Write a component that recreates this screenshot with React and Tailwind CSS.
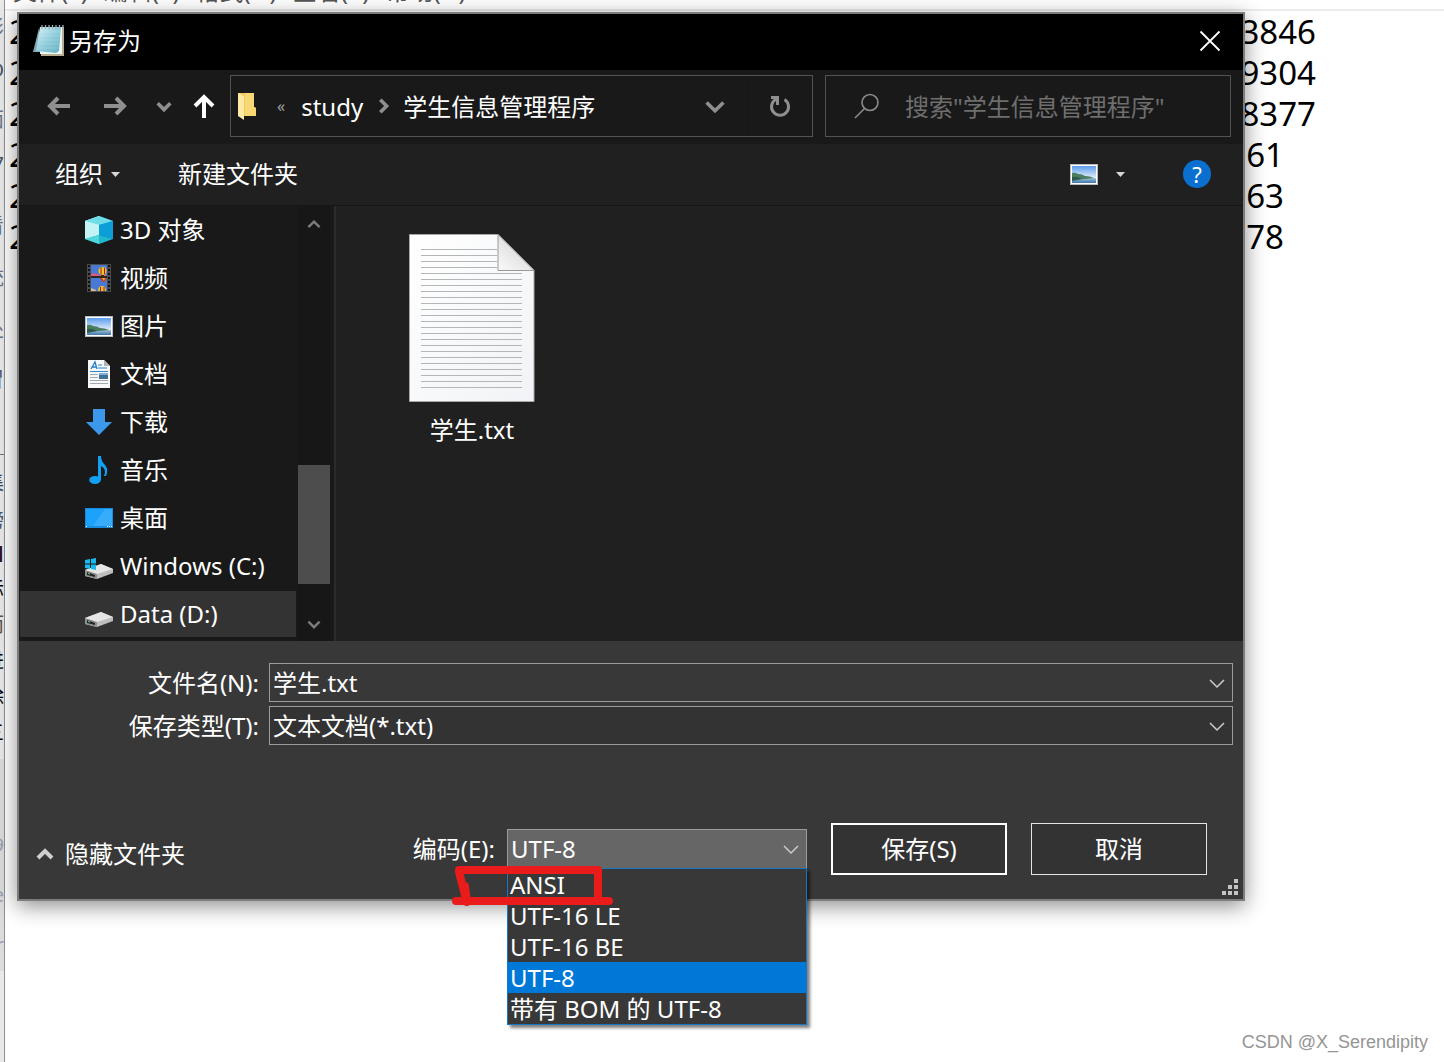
import { useState } from 'react';

const MENUS = ['文件(F)', '编辑(E)', '格式(O)', '查看(V)', '帮助(H)'];

const LINES = [
  { start: '2', end: '3846', pad: 'pr-32' },
  { start: '2', end: '9304', pad: 'pr-32' },
  { start: '2', end: '8377', pad: 'pr-32' },
  { start: '2', end: '561', pad: 'pr-40' },
  { start: '2', end: '763', pad: 'pr-40' },
  { start: '2', end: '678', pad: 'pr-40' },
];

const ENCODINGS = ['ANSI', 'UTF-16 LE', 'UTF-16 BE', 'UTF-8', '带有 BOM 的 UTF-8'];

// edge of the browser page that sits behind the editor
const EDGE = [
  { text: '影', cls: 'h-[50px] pt-2 text-gray-500' },
  { text: 'O', cls: 'h-[50px] text-gray-600' },
  { text: '面', cls: 'h-[44px] text-gray-500' },
  { text: '7', cls: 'h-[62px] text-gray-600' },
  { text: '看', cls: 'h-[52px] text-gray-500' },
  { text: '统', cls: 'h-[52px] text-gray-500' },
  { text: '处', cls: 'h-[50px] text-gray-500' },
  { text: '冒', cls: 'h-[95px] border-b border-gray-500 text-gray-600' },
  { text: '集', cls: 'h-[46px] pt-2 text-slate-700' },
  { text: '榜', cls: 'h-[34px] text-slate-600' },
  { text: '■', cls: 'h-[34px] text-[#3a1420]' },
  { text: '际', cls: 'h-[36px] text-black' },
  { text: '而', cls: 'h-[36px] text-[#5c5442]' },
  { text: '进', cls: 'h-[36px] text-black' },
  { text: '除', cls: 'h-[36px] text-black' },
  { text: '三', cls: 'h-[46px] text-black' },
  { text: '、', cls: 'h-[66px] bg-[#dcdcdc] text-gray-400' },
  { text: '9', cls: 'h-[50px] bg-[#dcdcdc] text-gray-400' },
  { text: 'e', cls: 'h-[50px] bg-[#dcdcdc] text-gray-400' },
  { text: 'r', cls: 'h-[46px] bg-[#dcdcdc] text-gray-400' },
];

function Chevron({ className, size = 20, width = 4, dir = 'down' }) {
  const paths = {
    down: 'M3 7 L10 14 L17 7',
    up: 'M3 14 L10 7 L17 14',
    right: 'M7 3 L14 10 L7 17',
  };
  return (
    <svg className={className} width={size} height={size} viewBox="0 0 20 20" fill="none" stroke="currentColor" strokeWidth={width}>
      <path d={paths[dir]} />
    </svg>
  );
}

function Caret() {
  return (
    <svg width="9" height="5" viewBox="0 0 9 5" fill="#d6d6d6">
      <path d="M0 0H9L4.5 5Z" />
    </svg>
  );
}

function NotepadIcon() {
  return (
    <svg width="32" height="34" viewBox="0 0 32 34">
      <defs>
        <linearGradient id="pad" x1="0" y1="0" x2="1" y2="1">
          <stop offset="0" stopColor="#d5f1f6" />
          <stop offset="0.55" stopColor="#8ccad9" />
          <stop offset="1" stopColor="#64afc2" />
        </linearGradient>
      </defs>
      <path d="M6 4L0 28H8Z" fill="#7fa9b3" />
      <path d="M8 3H31V32H8Z" fill="#b5ac92" />
      <path d="M7 3H29V30H7Z" fill="#edf6f5" />
      <path d="M7 3H28L26 27L23 29L3 27Z" fill="url(#pad)" />
      <path d="M7 8H27M6 12H27M6 16H26M5 20H26M4 24H25" stroke="#e0f5f8" strokeWidth="0.6" opacity="0.4" />
      <path d="M9 1V5M12.500 1V5M16 1V5M19.500 1V5M23 1V5M26.500 1V5M30 1V5" stroke="#9eb0b2" strokeWidth="1.3" />
    </svg>
  );
}

function FolderIcon() {
  return (
    <svg width="20" height="28" viewBox="0 0 20 28">
      <path d="M1 1H17V15L19 16V24H1Z" fill="#f3c85c" />
      <path d="M8 1H17V15L19 16V24H8Z" fill="#f8d775" />
      <path d="M1 1L7 4V28L1 24Z" fill="#ffeaa5" />
    </svg>
  );
}

function CubeIcon() {
  return (
    <svg width="28" height="28" viewBox="0 0 28 28">
      <path d="M0 5L14 0V19L0 23Z" fill="#84dfe6" />
      <path d="M0 5L14 0V9L14 19L0 23Z" fill="#a5ecee" />
      <path d="M14 0L28 5V23L14 19Z" fill="#12a5dc" />
      <path d="M0 5L14 0L28 5L14 9Z" fill="#6fdce8" />
      <path d="M14 9L28 5V23L14 19Z" fill="#0c9ed9" />
      <path d="M0 5L14 9V19L0 23Z" fill="#c4f3f4" />
      <path d="M0 23L14 19L28 23L14 28Z" fill="#22b8cf" />
      <path d="M0 23L14 19V28Z" fill="#4fd8dc" />
    </svg>
  );
}

function VideoIcon() {
  return (
    <svg width="24" height="28" viewBox="0 0 24 28">
      <path d="M0 0H24V28H0Z" fill="#4b4b4b" />
      <path d="M2 1V28M22 1V28" stroke="#111" strokeWidth="2" strokeDasharray="2 2" />
      <path d="M4 1H20V13H4ZM4 14H20V27H4Z" fill="#4779d5" />
      <path d="M4 10Q8 8 12 11L20 11V13H4Z" fill="#d75b86" />
      <path d="M4 12H20V14H4Z" fill="#302719" />
      <ellipse cx="15.500" cy="7" rx="4" ry="4" fill="#f0c02c" />
      <path d="M14 3.500V10.500M17.500 4V10" stroke="#9b1d22" />
      <path d="M14 11H17V13H14Z" fill="#3a2518" />
      <path d="M13 14H20L17.500 18H15.500Z" fill="#bf3d2c" />
      <path d="M15 14H18L17 17Z" fill="#e9b62c" />
      <path d="M11 27Q11 22 15 22Q19 22 19 27Z" fill="#efc12d" />
      <path d="M13.500 23V27M17 23V27" stroke="#9b1d22" />
      <path d="M4 24L9 26V27H4Z" fill="#d7bb93" />
    </svg>
  );
}

function PictureIcon() {
  return (
    <svg width="28" height="21" viewBox="0 0 28 21">
      <defs>
        <linearGradient id="sky" x1="0" y1="0" x2="0" y2="1">
          <stop offset="0" stopColor="#5c9ded" />
          <stop offset="1" stopColor="#e4f1fa" />
        </linearGradient>
        <linearGradient id="lake" x1="0" y1="0" x2="0" y2="1">
          <stop offset="0" stopColor="#a3c3dc" />
          <stop offset="1" stopColor="#3d75a8" />
        </linearGradient>
      </defs>
      <path d="M0 0H28V21H0Z" fill="#b9bec2" />
      <path d="M1 1H27V20H1Z" fill="#fff" />
      <path d="M2 2H26V14H2Z" fill="url(#sky)" />
      <path d="M2 14H26V19H2Z" fill="url(#lake)" />
      <path d="M2 9Q5 8 8 10Q12 10 15 12Q20 12 24 14L14 15L2 16Z" fill="#4b7d5e" />
      <path d="M2 13Q7 12 12 15L2 17Z" fill="#2f5a4f" />
    </svg>
  );
}

function DocumentIcon() {
  return (
    <svg width="22" height="28" viewBox="0 0 22 28">
      <path d="M0 0H16L22 6V28H0Z" fill="#f7f8fa" />
      <path d="M16 0V6H22Z" fill="#aeb4ba" />
      <path d="M3 9L7 2L9 9M4 7H9" stroke="#277dc4" strokeWidth="1.300" fill="none" />
      <path d="M10 5H14M10 8H19M2 11.500H20" stroke="#2c86cb" strokeWidth="1.200" />
      <path d="M2 14.500H10M2 17.500H10M2 20.500H20M2 23.500H20" stroke="#a3a8ac" />
      <path d="M11 13H20V19H11Z" fill="#3e7094" />
      <path d="M11 13H20V15H11Z" fill="#83a9d5" />
    </svg>
  );
}

function DownloadIcon() {
  return (
    <svg width="26" height="26" viewBox="0 0 26 26">
      <path d="M7 0H19V13H26L13 26L0 13H7Z" fill="#3b98ea" />
    </svg>
  );
}

function MusicIcon() {
  return (
    <svg width="20" height="28" viewBox="0 0 20 28" fill="#12a0f5">
      <ellipse cx="6" cy="24" rx="5.800" ry="4" />
      <path d="M9 0H12Q12 5 16 9Q20 14 17 20L15 20Q18 13 12 10V24H9Z" />
    </svg>
  );
}

function DesktopIcon() {
  return (
    <svg width="28" height="20" viewBox="0 0 28 20">
      <path d="M0 0H28V20H0Z" fill="#168be0" />
      <path d="M1 1H27V18H1Z" fill="#1da2fc" />
      <path d="M20 1H27V18H8Z" fill="#36acfb" />
      <path d="M1 18.500H2M22 18.500H23M24 18.500H25M26 18.500H27" stroke="#fff" />
    </svg>
  );
}

function DriveIcon({ system }) {
  return (
    <svg width="28" height="28" viewBox="0 0 28 28">
      <path d="M0 18L16 12L28 17V21L12 27L0 24Z" fill="#bebebe" />
      <path d="M0 18L16 12L28 17L12 22Z" fill="#e6e6e6" />
      <path d="M0 18L12 22V27L0 24Z" fill="#909090" />
      <path d="M2 20L10 23V25L2 23Z" fill="#252525" />
      <path d="M3 21.500L5 22" stroke="#54e06b" />
      {system && <path d="M0 8L5 7V11.500H0ZM6 7L11 6V11.500H6ZM0 12.500H5V17L0 16ZM6 12.500H11V18L6 17Z" fill="#19b9ee" />}
    </svg>
  );
}

function TextFileIcon() {
  const rows = Array.from({ length: 24 }, (_, i) => 15.5 + i * 6);
  return (
    <svg width="126" height="168" viewBox="0 0 126 168">
      <defs>
        <linearGradient id="paper" x1="0" y1="0" x2="1" y2="1">
          <stop offset="0" stopColor="#fff" />
          <stop offset="1" stopColor="#f1f3f6" />
        </linearGradient>
        <linearGradient id="fold" x1="0" y1="1" x2="0.6" y2="0.3">
          <stop offset="0" stopColor="#fafafa" />
          <stop offset="1" stopColor="#dcdcdc" />
        </linearGradient>
      </defs>
      <path d="M0.500 0.500H89L125 36V167.500H0.500Z" fill="url(#paper)" stroke="#a8a8a8" />
      {rows.map((y) => (
        <path key={y} d={`M12 ${y}H${y < 38 ? 88 : 113}`} stroke="#b5b6b8" />
      ))}
      <path d="M89 0.500L125 36.500H89Z" fill="url(#fold)" stroke="#999" />
    </svg>
  );
}

const PLACES = [
  { name: '3D 对象', icon: <CubeIcon /> },
  { name: '视频', icon: <VideoIcon /> },
  { name: '图片', icon: <PictureIcon /> },
  { name: '文档', icon: <DocumentIcon /> },
  { name: '下载', icon: <DownloadIcon /> },
  { name: '音乐', icon: <MusicIcon /> },
  { name: '桌面', icon: <DesktopIcon /> },
  { name: 'Windows (C:)', icon: <DriveIcon system /> },
  { name: 'Data (D:)', icon: <DriveIcon /> },
];

function Editor() {
  return (
    <div className="flex min-h-screen">
      <div className="w-[5px] shrink-0 overflow-hidden border-r border-[#8f8f8f] bg-[#e9e9e9] text-xl leading-10">
        {EDGE.map((item) => (
          <div key={item.text} className={`flex justify-end overflow-hidden ${item.cls}`}>
            {item.text}
          </div>
        ))}
      </div>
      <div className="min-w-0 flex-1 bg-white">
        <div className="flex h-[11px] items-end gap-4 overflow-hidden border-b-2 border-[#ececec] pb-1.5 pl-2 text-2xl leading-6 text-[#555]">
          {MENUS.map((menu) => (
            <span key={menu} className="whitespace-nowrap">{menu}</span>
          ))}
        </div>
        <div className="text-[33px] leading-[41px] text-black">
          {LINES.map((line) => (
            <div key={line.end} className={`flex justify-between pl-1 ${line.pad}`}>
              <span>{line.start}</span>
              <span>{line.end}</span>
            </div>
          ))}
        </div>
      </div>
    </div>
  );
}

function AddressBar() {
  return (
    <div className="flex h-[74px] items-center bg-[#191919] pr-3 pb-0.5 pl-7">
      <button aria-label="返回" className="text-[#8f8f8f]">
        <svg width="24" height="20" viewBox="0 0 24 20" fill="none" stroke="currentColor" strokeWidth="4">
          <path d="M23 10H3M11 2L3 10L11 18" />
        </svg>
      </button>
      <button aria-label="前进" className="ml-8 text-[#8f8f8f]">
        <svg width="24" height="20" viewBox="0 0 24 20" fill="none" stroke="currentColor" strokeWidth="4">
          <path d="M1 10H21M13 2L21 10L13 18" />
        </svg>
      </button>
      <button aria-label="最近浏览的位置" className="ml-7 text-[#8f8f8f]">
        <Chevron size={18} />
      </button>
      <button aria-label="上移" className="ml-5 text-white">
        <svg width="22" height="24" viewBox="0 0 22 24" fill="none" stroke="currentColor" strokeWidth="4">
          <path d="M11 24V4M2 12L11 3L20 12" />
        </svg>
      </button>
      <div className="ml-[15px] flex h-[62px] min-w-0 flex-1 items-center border border-[#535353] pl-1.5 text-white">
        <FolderIcon />
        <span className="ml-5 text-base text-[#a0a0a0]">«</span>
        <button className="ml-4 pt-0.5">study</button>
        <Chevron className="mx-[11px] text-[#8f8f8f]" dir="right" size={18} />
        <button className="pt-0.5 whitespace-nowrap">学生信息管理程序</button>
        <button aria-label="以前的位置" className="ml-auto pr-5 text-[#8f8f8f]">
          <Chevron size={24} width={3} />
        </button>
        <button aria-label="刷新" className="flex h-full w-[65px] items-center justify-center border-l border-[#161616] text-[#8f8f8f]">
          <svg width="22" height="24" viewBox="0 0 22 24" fill="none" stroke="currentColor" strokeWidth="3">
            <path d="M15.500 5.500A8.500 8.500 0 1 1 7.500 5M2 3.500H8.500V11" />
          </svg>
        </button>
      </div>
      <label className="ml-3 flex h-[62px] w-[406px] items-center border border-[#535353] pl-7 text-[#8a8a8a]">
        <svg width="26" height="26" viewBox="0 0 26 26" fill="none" stroke="currentColor" strokeWidth="1.600">
          <circle cx="16" cy="9.500" r="8" />
          <path d="M10.500 15.500L1 25" />
        </svg>
        <input
          type="text"
          aria-label="搜索"
          placeholder={'搜索"学生信息管理程序"'}
          className="ml-[25px] min-w-0 flex-1 bg-transparent pt-0.5 text-white outline-none placeholder:text-[#6e6e6e]"
        />
      </label>
    </div>
  );
}

function SideBar() {
  const [selected, setSelected] = useState('Data (D:)');

  return (
    <div className="flex w-[317px] shrink-0 border-r-2 border-[#2b2b2b] bg-[#191919]">
      <nav className="flex-1 pt-px pr-0.5 pl-px">
        {PLACES.map((place) => (
          <button
            key={place.name}
            onClick={() => setSelected(place.name)}
            className={`flex h-12 w-full items-center border-b-2 border-[#191919] pl-16 text-left whitespace-nowrap ${
              selected === place.name ? 'bg-[#333]' : ''
            }`}
          >
            <span className="flex w-[30px] justify-center">{place.icon}</span>
            <span className="ml-1.5">{place.name}</span>
          </button>
        ))}
      </nav>
      <div className="mr-1 flex w-8 flex-col items-center bg-[#171717] text-[#7c7c7c]">
        <Chevron className="mt-2.5 mb-auto" dir="up" size={16} width={3} />
        <div className="h-[119px] w-full bg-[#4d4d4d]" />
        <Chevron className="mt-8 mb-[9px]" size={16} width={3} />
      </div>
    </div>
  );
}

function EncodingSelect() {
  const [encoding, setEncoding] = useState('UTF-8');
  const [open, setOpen] = useState(true);

  return (
    <div className="relative w-[300px]">
      <select
        id="encoding"
        value={encoding}
        onChange={(e) => setEncoding(e.target.value)}
        onMouseDown={(e) => {
          e.preventDefault();
          setOpen(!open);
        }}
        className="h-10 w-full appearance-none border border-[#9b9b9b] bg-[#666] px-[3px] outline-none"
      >
        {ENCODINGS.map((name) => (
          <option key={name}>{name}</option>
        ))}
      </select>
      <Chevron className="pointer-events-none absolute top-2.5 right-1.5 text-[#ccc]" width={1.5} />
      {open && (
        <ul className="absolute top-[39px] left-0 w-full border border-[#1a78c2] bg-[#383838] leading-[31px] shadow-[3px_3px_3px_rgba(0,0,0,0.5)]">
          {ENCODINGS.map((name) => (
            <li
              key={name}
              onClick={() => {
                setEncoding(name);
                setOpen(false);
              }}
              className={`h-[31px] pl-0.5 whitespace-nowrap ${name === encoding ? 'bg-[#0078d7]' : ''}`}
            >
              {name}
            </li>
          ))}
        </ul>
      )}
      <svg
        className="pointer-events-none absolute top-9 -left-14"
        width="164"
        height="44"
        viewBox="0 0 164 44"
        fill="none"
        stroke="#e91b1b"
        strokeWidth="8"
        strokeLinecap="round"
        strokeLinejoin="round"
      >
        <path d="M5 36H158M8 7L15 34M14 21L16 37M8 5H147" />
        <path d="M147 5V35" strokeLinecap="butt" />
      </svg>
    </div>
  );
}

function SaveForm() {
  const [fileName, setFileName] = useState('学生.txt');
  const [folders, setFolders] = useState(true);

  return (
    <form onSubmit={(e) => e.preventDefault()} className="relative bg-[#383838] pt-[22px] pb-6">
      <div className="grid grid-cols-[240px_1fr] items-center gap-x-2.5 gap-y-1 pr-2.5">
        <label htmlFor="name" className="text-right">文件名(N):</label>
        <div className="relative">
          <input
            id="name"
            type="text"
            value={fileName}
            onChange={(e) => setFileName(e.target.value)}
            className="block h-[39px] w-full border border-[#9b9b9b] bg-[#383838] px-[3px] pb-0.5 outline-none"
          />
          <Chevron className="pointer-events-none absolute top-2.5 right-1.5 text-[#ccc]" width={1.5} />
        </div>
        <label htmlFor="type" className="text-right">保存类型(T):</label>
        <div className="relative">
          <select id="type" className="block h-[39px] w-full appearance-none border border-[#9b9b9b] bg-[#333] px-[3px] outline-none">
            <option>文本文档(*.txt)</option>
          </select>
          <Chevron className="pointer-events-none absolute top-2.5 right-1.5 text-[#ccc]" width={1.5} />
        </div>
      </div>
      <div className="mt-[78px] flex items-center gap-6 pr-9 pl-4">
        <button type="button" onClick={() => setFolders(!folders)} className="mr-auto flex items-center gap-2.5 pt-2.5">
          <Chevron className="text-[#d0d0d0]" dir={folders ? 'up' : 'down'} />
          {folders ? '隐藏文件夹' : '浏览文件夹'}
        </button>
        <div className="flex items-center gap-3">
          <label htmlFor="encoding">编码(E):</label>
          <EncodingSelect />
        </div>
        <button type="submit" className="h-[52px] w-44 border-2 border-white bg-[#333]">保存(S)</button>
        <button type="button" className="h-[52px] w-44 border border-[#e5e5e5] bg-[#333]">取消</button>
      </div>
      <svg className="absolute right-[5px] bottom-1" width="16" height="16" viewBox="0 0 16 16" fill="#c4c4c4">
        <path d="M12 0H16V4H12ZM6 6H10V10H6ZM12 6H16V10H12ZM0 12H4V16H0ZM6 12H10V16H6ZM12 12H16V16H12Z" />
      </svg>
    </form>
  );
}

export default function App() {
  return (
    <div className="relative min-h-screen overflow-hidden bg-white font-['Noto_Sans','Noto_Sans_CJK_SC',sans-serif]">
      <Editor />

      <div
        role="dialog"
        aria-label="另存为"
        className="absolute top-3 right-[199px] left-[17px] border-2 border-[#7c7c7c] text-2xl leading-8 text-white shadow-[0_5px_20px_rgba(0,0,0,0.45)]"
      >
        <div className="flex h-14 items-center bg-black pr-[22px] pb-0.5 pl-3.5">
          <NotepadIcon />
          <span className="ml-1">另存为</span>
          <button aria-label="关闭" className="ml-auto">
            <svg width="22" height="22" viewBox="0 0 22 22" stroke="#fff" strokeWidth="1.800">
              <path d="M1.500 1.500L20.500 20.500M20.500 1.500L1.500 20.500" />
            </svg>
          </button>
        </div>

        <AddressBar />

        <div className="flex h-[62px] items-center border-b border-[#161616] bg-[#202020] pr-8 pb-px pl-9">
          <button className="flex items-center gap-2">
            组织
            <Caret />
          </button>
          <button className="ml-[58px]">新建文件夹</button>
          <button aria-label="更改视图" className="ml-auto flex items-center gap-[18px]">
            <PictureIcon />
            <Caret />
          </button>
          <button aria-label="帮助" className="ml-[58px] h-7 w-7 rounded-full bg-[#0b6fd0] text-[22px] leading-7">
            ?
          </button>
        </div>

        <div className="flex bg-[#202020]">
          <SideBar />
          <div className="h-[435px] min-w-0 flex-1 px-[59px] pt-7">
            <button className="flex w-[154px] flex-col items-center gap-3">
              <TextFileIcon />
              学生.txt
            </button>
          </div>
        </div>

        <SaveForm />
      </div>

      <div className="absolute right-4 bottom-1.5 font-['Liberation_Sans',sans-serif] text-lg leading-7 text-[#959595]">
        CSDN @X_Serendipity
      </div>
    </div>
  );
}
